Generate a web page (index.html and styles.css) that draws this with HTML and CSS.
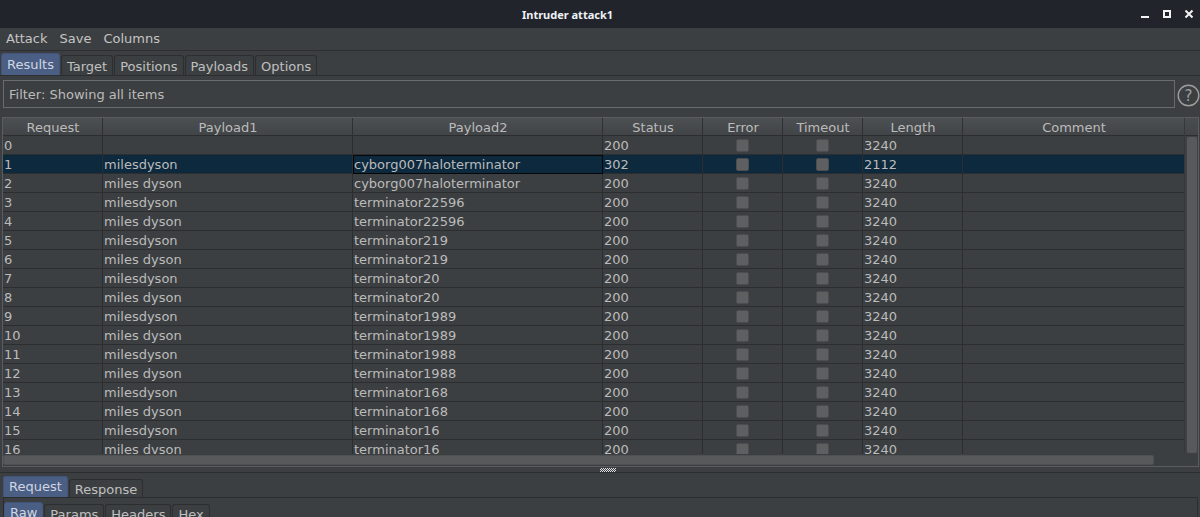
FILE: index.html
```html
<!DOCTYPE html>
<html>
<head>
<meta charset="utf-8">
<title>Intruder attack1</title>
<link rel="stylesheet" href="styles.css">
</head>
<body>
<div class="window">
  <div class="titlebar">
    <div class="title">Intruder attack1</div>
    <svg class="wc" width="65" height="28" viewBox="0 0 65 28">
      <rect x="6" y="16" width="8" height="2" fill="#f2f2f2"/>
      <rect x="29" y="11" width="6" height="6" fill="none" stroke="#f2f2f2" stroke-width="2"/>
      <path d="M50.5 10.5 L57.5 17.5 M57.5 10.5 L50.5 17.5" stroke="#f2f2f2" stroke-width="2" fill="none"/>
    </svg>
  </div>
  <div class="menubar">
    <span class="menu-item">Attack</span>
    <span class="menu-item">Save</span>
    <span class="menu-item">Columns</span>
  </div>
  <div class="tabs main-tabs">
    <div class="tab selected">Results</div>
    <div class="tab">Target</div>
    <div class="tab">Positions</div>
    <div class="tab">Payloads</div>
    <div class="tab">Options</div>
  </div>
  <div class="pane">
    <div class="filter-row">
      <div class="filter">Filter: Showing all items</div>
      <svg class="help" width="23" height="23" viewBox="0 0 23 23">
        <circle cx="11.5" cy="11.5" r="10.3" fill="none" stroke="#9d9d9d" stroke-width="1.4"/>
        <text x="11.5" y="17" text-anchor="middle" class="help-q">?</text>
      </svg>
    </div>
    <div class="scrollpane">
      <div class="table-area">
        <div class="table">
          <div class="row head">
            <div class="cell">Request</div>
            <div class="cell">Payload1</div>
            <div class="cell">Payload2</div>
            <div class="cell">Status</div>
            <div class="cell">Error</div>
            <div class="cell">Timeout</div>
            <div class="cell">Length</div>
            <div class="cell">Comment</div>
          </div>
          <div class="row"><div class="cell">0</div><div class="cell"></div><div class="cell"></div><div class="cell">200</div><div class="cell"><span class="cb"></span></div><div class="cell"><span class="cb"></span></div><div class="cell">3240</div><div class="cell"></div></div>
          <div class="row sel"><div class="cell">1</div><div class="cell">milesdyson</div><div class="cell focus">cyborg007haloterminator</div><div class="cell">302</div><div class="cell"><span class="cb"></span></div><div class="cell"><span class="cb"></span></div><div class="cell">2112</div><div class="cell"></div></div>
          <div class="row"><div class="cell">2</div><div class="cell">miles dyson</div><div class="cell">cyborg007haloterminator</div><div class="cell">200</div><div class="cell"><span class="cb"></span></div><div class="cell"><span class="cb"></span></div><div class="cell">3240</div><div class="cell"></div></div>
          <div class="row"><div class="cell">3</div><div class="cell">milesdyson</div><div class="cell">terminator22596</div><div class="cell">200</div><div class="cell"><span class="cb"></span></div><div class="cell"><span class="cb"></span></div><div class="cell">3240</div><div class="cell"></div></div>
          <div class="row"><div class="cell">4</div><div class="cell">miles dyson</div><div class="cell">terminator22596</div><div class="cell">200</div><div class="cell"><span class="cb"></span></div><div class="cell"><span class="cb"></span></div><div class="cell">3240</div><div class="cell"></div></div>
          <div class="row"><div class="cell">5</div><div class="cell">milesdyson</div><div class="cell">terminator219</div><div class="cell">200</div><div class="cell"><span class="cb"></span></div><div class="cell"><span class="cb"></span></div><div class="cell">3240</div><div class="cell"></div></div>
          <div class="row"><div class="cell">6</div><div class="cell">miles dyson</div><div class="cell">terminator219</div><div class="cell">200</div><div class="cell"><span class="cb"></span></div><div class="cell"><span class="cb"></span></div><div class="cell">3240</div><div class="cell"></div></div>
          <div class="row"><div class="cell">7</div><div class="cell">milesdyson</div><div class="cell">terminator20</div><div class="cell">200</div><div class="cell"><span class="cb"></span></div><div class="cell"><span class="cb"></span></div><div class="cell">3240</div><div class="cell"></div></div>
          <div class="row"><div class="cell">8</div><div class="cell">miles dyson</div><div class="cell">terminator20</div><div class="cell">200</div><div class="cell"><span class="cb"></span></div><div class="cell"><span class="cb"></span></div><div class="cell">3240</div><div class="cell"></div></div>
          <div class="row"><div class="cell">9</div><div class="cell">milesdyson</div><div class="cell">terminator1989</div><div class="cell">200</div><div class="cell"><span class="cb"></span></div><div class="cell"><span class="cb"></span></div><div class="cell">3240</div><div class="cell"></div></div>
          <div class="row"><div class="cell">10</div><div class="cell">miles dyson</div><div class="cell">terminator1989</div><div class="cell">200</div><div class="cell"><span class="cb"></span></div><div class="cell"><span class="cb"></span></div><div class="cell">3240</div><div class="cell"></div></div>
          <div class="row"><div class="cell">11</div><div class="cell">milesdyson</div><div class="cell">terminator1988</div><div class="cell">200</div><div class="cell"><span class="cb"></span></div><div class="cell"><span class="cb"></span></div><div class="cell">3240</div><div class="cell"></div></div>
          <div class="row"><div class="cell">12</div><div class="cell">miles dyson</div><div class="cell">terminator1988</div><div class="cell">200</div><div class="cell"><span class="cb"></span></div><div class="cell"><span class="cb"></span></div><div class="cell">3240</div><div class="cell"></div></div>
          <div class="row"><div class="cell">13</div><div class="cell">milesdyson</div><div class="cell">terminator168</div><div class="cell">200</div><div class="cell"><span class="cb"></span></div><div class="cell"><span class="cb"></span></div><div class="cell">3240</div><div class="cell"></div></div>
          <div class="row"><div class="cell">14</div><div class="cell">miles dyson</div><div class="cell">terminator168</div><div class="cell">200</div><div class="cell"><span class="cb"></span></div><div class="cell"><span class="cb"></span></div><div class="cell">3240</div><div class="cell"></div></div>
          <div class="row"><div class="cell">15</div><div class="cell">milesdyson</div><div class="cell">terminator16</div><div class="cell">200</div><div class="cell"><span class="cb"></span></div><div class="cell"><span class="cb"></span></div><div class="cell">3240</div><div class="cell"></div></div>
          <div class="row"><div class="cell">16</div><div class="cell">miles dyson</div><div class="cell">terminator16</div><div class="cell">200</div><div class="cell"><span class="cb"></span></div><div class="cell"><span class="cb"></span></div><div class="cell">3240</div><div class="cell"></div></div>
        </div>
        <div class="vscroll">
          <div class="vcorner"></div>
          <div class="vthumb"></div>
        </div>
      </div>
      <div class="hscroll"><div class="hthumb"></div></div>
    </div>
    <div class="divider"><div class="grip"></div></div>
    <div class="tabs bottom-tabs">
      <div class="tab selected">Request</div>
      <div class="tab">Response</div>
    </div>
    <div class="subpane">
      <div class="tabs sub-tabs">
        <div class="tab selected">Raw</div>
        <div class="tab">Params</div>
        <div class="tab">Headers</div>
        <div class="tab">Hex</div>
      </div>
    </div>
  </div>
</div>
</body>
</html>
```

FILE: styles.css
```css
* { box-sizing: border-box; }
html, body {
  margin: 0;
  padding: 0;
  background: #3c3f41;
  overflow: hidden;
}
body {
  font-family: "DejaVu Sans", "Liberation Sans", sans-serif;
  font-size: 13px;
  color: #bbbbbb;
}
.window {
  width: 1200px;
  height: 517px;
  overflow: hidden;
  background: #3c3f41;
}
.titlebar {
  height: 28px;
  background: #21242b;
  display: flex;
  align-items: center;
}
.title {
  flex: 1;
  text-align: center;
  font-family: "Noto Sans", "DejaVu Sans", sans-serif;
  font-weight: bold;
  font-size: 11px;
  color: #eef2f6;
  padding-top: 1px;
}
.wc { display: block; flex: none; }

.menubar {
  height: 23px;
  display: flex;
  align-items: center;
  border-bottom: 1px solid #2d2f31;
  padding-bottom: 1px;
}
.menu-item {
  padding: 0 6px;
  color: #c4c4c4;
}

.tabs {
  display: flex;
  align-items: flex-end;
}
.tab {
  height: 20px;
  line-height: 19px;
  padding: 1px 5px 0;
  margin-right: 1px;
  border: 1px solid #2c2e30;
  border-bottom: none;
  border-radius: 3px 3px 0 0;
  color: #c0c0c0;
  background: #3c3f41;
}
.tab.selected {
  height: 22px;
  line-height: 19px;
  padding-top: 1px;
  background: #4b5e84;
  border-color: #43557a;
  color: #cfd6e2;
}
.main-tabs {
  margin-top: 2px;
  height: 22px;
  padding-left: 1px;
}

.pane {
  border-top: 1px solid #2c2e30;
  padding-top: 4px;
}
.filter-row {
  display: flex;
  align-items: center;
  height: 28px;
}
.filter {
  margin-left: 3px;
  width: 1172px;
  height: 28px;
  border: 1px solid #6a6b6c;
  padding-left: 5px;
  padding-top: 1px;
  line-height: 25px;
}
.help {
  display: block;
  margin-left: 2px;
  margin-top: 2px;
}
.help-q {
  font-family: "DejaVu Sans", sans-serif;
  font-size: 15px;
  fill: #a0a0a0;
}

.scrollpane {
  margin: 9px 1px 0 2px;
  width: 1197px;
  height: 350px;
  border: 1px solid #5a5c5e;
}
.table-area {
  display: flex;
  height: 336px;
}
.table {
  width: 1181px;
  height: 336px;
  overflow: hidden;
  flex: none;
}
.row {
  display: grid;
  grid-template-columns: 100px 250px 250px 100px 80px 80px 100px 221px;
  height: 19px;
}
.cell {
  border-right: 1px solid #2b2d2f;
  border-bottom: 1px solid #2b2d2f;
  padding-left: 1px;
  padding-top: 1px;
  line-height: 17px;
  white-space: nowrap;
  overflow: hidden;
  display: flex;
  align-items: center;
}
.row .cell:last-child { border-right: none; }
.row.head {
  height: 18px;
  background: linear-gradient(#4d5052, #414446);
}
.row.head .cell {
  justify-content: center;
  line-height: 15px;
  padding-top: 2px;
  border-bottom-color: #2b2d2f;
  border-right-color: #2e3032;
}
.row.sel { background: #0d293e; }
.cell.focus {
  border: 1px solid #050608;
  padding-left: 0;
  padding-top: 0;
}
.cb {
  display: block;
  width: 13px;
  height: 13px;
  margin: -1px auto 0;
  background: #5d5f61;
  border: 1px solid #4b4d4f;
  border-radius: 2px;
  position: relative;
  left: -1px;
}

.vscroll {
  width: 14px;
  flex: none;
  background: #3e4143;
  border-left: 1px solid #36393b;
}
.vcorner {
  height: 18px;
  background: linear-gradient(#4a4d4f, #424547);
  border-bottom: 1px solid #2b2d2f;
}
.vthumb {
  margin: 1px 1px 0 2px;
  height: 316px;
  background: #57595b;
  border-radius: 2px;
}
.hscroll {
  height: 12px;
  padding: 1px 0 0 0;
}
.hthumb {
  width: 1151px;
  height: 10px;
  background: #58595a;
  border: 1px solid #4e5052;
  border-radius: 2px;
}

.divider {
  height: 5px;
  border-bottom: 1px solid #2b2d2f;
}
.grip {
  width: 16px;
  height: 4px;
  margin: 1px 0 0 600px;
  background: conic-gradient(#e0e0e0 25%, #3c3f41 0 50%, #e0e0e0 0 75%, #3c3f41 0) 0 0 / 2px 2px;
}

.bottom-tabs {
  height: 24px;
  padding-left: 3px;
}
.bottom-tabs .tab { height: 18px; line-height: 17px; }
.bottom-tabs .tab.selected { height: 21px; line-height: 18px; }

.subpane {
  margin-left: 3px;
  width: 1195px;
  height: 30px;
  border: 1px solid #2b2d2f;
  padding-top: 4px;
}
.sub-tabs { padding-left: 0; height: 17px; align-items: flex-start; }
.sub-tabs .tab { height: 20px; line-height: 18px; margin-top: 2px; }
.sub-tabs .tab.selected { margin-top: 0; }
```
